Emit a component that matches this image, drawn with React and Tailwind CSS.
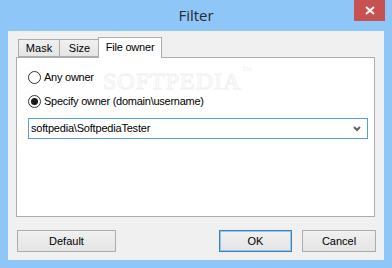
import React, { useState } from 'react';

const font = { fontFamily: '"Liberation Sans", Arial, sans-serif' };

function Radio({ checked, label, onClick }) {
  return (
    <div className="flex items-center gap-[3px] cursor-default" onClick={onClick}>
      <span className="w-[13px] h-[13px] rounded-full border border-[#333] bg-white flex items-center justify-center">
        {checked && <span className="w-[7px] h-[7px] rounded-full bg-[#1a1a1a]" />}
      </span>
      <span className="text-[11px] tracking-[-0.25px] text-black leading-none">{label}</span>
    </div>
  );
}

function Button({ children, className = '', focused }) {
  return (
    <button
      className={`h-[22px] text-[11px] text-black bg-gradient-to-b from-[#f0f0f0] to-[#e5e5e5] border ${
        focused ? 'border-[#3c7fb1] ring-1 ring-inset ring-[#90c8f6]' : 'border-[#acacac]'
      } ${className}`}
    >
      {children}
    </button>
  );
}

export default function App() {
  const [owner, setOwner] = useState('specify');

  return (
    <div className="w-[392px] h-[268px] bg-[#8dc6f7] flex flex-col select-none" style={font}>
      <div className="h-[31px] relative flex items-center justify-center">
        <span className="text-[15px] text-[#2b2b2b] mt-[-1px]" style={{ fontFamily: '"Open Sans", "Noto Sans", sans-serif' }}>
          Filter
        </span>
        <div className="absolute right-[7px] top-0 w-[31px] h-[21px] bg-[#c75050] flex items-center justify-center">
          <svg width="10" height="9" viewBox="0 0 10 9">
            <path d="M1 1 L9 8 M9 1 L1 8" stroke="#fff" strokeWidth="2" />
          </svg>
        </div>
      </div>

      <div className="mx-[8px] mb-[8px] flex-1 bg-[#f0f0f0] flex flex-col pt-[6px] pl-[8px] pr-[9px] pb-[8px]">
        <div className="flex items-end pl-[2px] h-[20px] relative z-10">
          <div className="h-[18px] w-[42px] border border-[#acacac] bg-gradient-to-b from-[#f0f0f0] to-[#e5e5e5] text-[11px] flex items-center justify-center pt-[1px]">
            Mask
          </div>
          <div className="h-[18px] w-[41px] -ml-px border border-[#acacac] bg-gradient-to-b from-[#f0f0f0] to-[#e5e5e5] text-[11px] flex items-center justify-center pt-[1px]">
            Size
          </div>
          <div className="h-[21px] w-[64px] -ml-[2px] -mb-px border border-b-0 border-[#acacac] bg-white text-[11px] tracking-[-0.2px] flex items-center justify-center pb-[2px]">
            File owner
          </div>
        </div>

        <div className="h-[160px] bg-white border border-[#acacac] relative pt-[13px] pl-[11px] pr-[6px]">
          <div className="absolute left-[86px] top-[5px] pointer-events-none" style={{ fontFamily: '"Liberation Serif", serif' }}>
            <span className="text-[24px] tracking-[1px] text-transparent" style={{ WebkitTextStroke: '1px #f1f1f1' }}>
              SOFTPEDIA
            </span>
            <span className="absolute -right-[10px] top-[2px] text-[6px] text-[#ececec]">TM</span>
          </div>

          <div className="relative flex flex-col gap-[11px]">
            <Radio checked={owner === 'any'} label="Any owner" onClick={() => setOwner('any')} />
            <Radio
              checked={owner === 'specify'}
              label="Specify owner (domain\username)"
              onClick={() => setOwner('specify')}
            />
          </div>

          <div className="relative mt-[10px] h-[21px] border border-[#569de5] bg-white flex items-center justify-between pl-[2px] pr-[6px]">
            <span className="text-[11px] tracking-[-0.2px] text-black">softpedia\SoftpediaTester</span>
            <svg width="8" height="6" viewBox="0 0 8 6">
              <path d="M1 1 L4 4 L7 1" stroke="#606060" strokeWidth="2" fill="none" />
            </svg>
          </div>
        </div>

        <div className="flex-1" />

        <div className="flex items-center">
          <Button className="w-[99px] ml-[1px]">Default</Button>
          <div className="flex-1" />
          <Button className="w-[73px]" focused>
            OK
          </Button>
          <Button className="w-[74px] ml-[10px] mr-[-1px]">Cancel</Button>
        </div>
      </div>
    </div>
  );
}
